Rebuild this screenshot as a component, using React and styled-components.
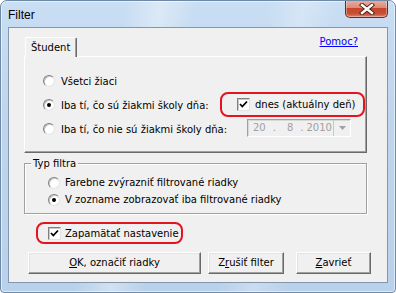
import React from "react";
import styled, { createGlobalStyle } from "styled-components";

const GlobalStyle = createGlobalStyle`
  html, body {
    margin: 0;
    padding: 0;
    background: #ffffff;
  }
  body {
    font-family: "DejaVu Sans", "Liberation Sans", sans-serif;
    font-size: 10px;
    color: #000;
  }
`;

const Window = styled.div`
  width: 396px;
  height: 293px;
  box-sizing: border-box;
  display: flex;
  flex-direction: column;
  border: 1px solid #6f8aa6;
  border-radius: 7px 7px 4px 4px;
  padding: 0 7px 9px 7px;
  background:
    linear-gradient(100deg, rgba(255,255,255,0) 28%, rgba(255,255,255,0.35) 36%, rgba(255,255,255,0) 44%),
    linear-gradient(100deg, rgba(255,255,255,0) 60%, rgba(255,255,255,0.25) 68%, rgba(255,255,255,0) 76%),
    linear-gradient(to bottom, #c9def3 0%, #bed5ed 40%, #b9d1ea 100%);
  box-shadow: inset 0 0 0 1px rgba(255, 255, 255, 0.55);
  overflow: hidden;
`;

const TitleBar = styled.div`
  height: 26px;
  display: flex;
  align-items: center;
  flex-shrink: 0;
`;

const Title = styled.span`
  font-family: "Liberation Sans", Arial, sans-serif;
  font-size: 12px;
  color: #000;
  margin-top: 1px;
`;

const CloseButton = styled.div`
  margin-left: auto;
  align-self: flex-start;
  margin-top: -1px;
  width: 43px;
  height: 18px;
  box-sizing: border-box;
  border: 1px solid #6b2a1e;
  border-top: none;
  border-radius: 0 0 5px 5px;
  background: linear-gradient(
    to bottom,
    #eab1a3 0%,
    #dc8a76 45%,
    #c5462d 50%,
    #c84f35 80%,
    #e0826a 100%
  );
  box-shadow: inset 0 0 0 1px rgba(255, 255, 255, 0.35);
  display: flex;
  align-items: center;
  justify-content: center;
`;

const Client = styled.div`
  flex: 1;
  display: flex;
  flex-direction: column;
  background: #f0f0f0;
  border: 1px solid #8396ab;
`;

const TabRow = styled.div`
  height: 20px;
  margin: 9px 20px 0 15px;
  display: flex;
  align-items: flex-start;
`;

const Tab = styled.div`
  position: relative;
  z-index: 1;
  margin-left: 1px;
  height: 20px;
  box-sizing: border-box;
  padding: 0 6px 1px 5px;
  display: flex;
  align-items: center;
  background: #f0f0f0;
  border-top: 1px solid #ffffff;
  border-left: 1px solid #ffffff;
  border-right: 1px solid #696969;
  border-radius: 2px 2px 0 0;
  box-shadow: inset -1px 0 0 #a0a0a0;
`;

const HelpLink = styled.a`
  margin-left: auto;
  margin-right: 9px;
  margin-top: -1px;
  color: #0000ff;
  text-decoration: underline;
  cursor: pointer;
`;

const TabPanel = styled.div`
  margin: -1px 20px 0 15px;
  height: 97px;
  box-sizing: border-box;
  border: 1px solid;
  border-color: #ffffff #696969 #696969 #ffffff;
  box-shadow: inset -1px -1px 0 #a0a0a0;
  padding: 12px 0 0 18px;
  display: flex;
  flex-direction: column;
`;

const OptionRow = styled.div`
  height: ${(p) => p.$h}px;
  display: flex;
  align-items: center;
`;

const Radio = styled.span`
  position: relative;
  width: 12px;
  height: 12px;
  box-sizing: border-box;
  flex-shrink: 0;
  border-radius: 50%;
  background: #ffffff;
  border: 1px solid;
  border-color: #808080 #e2e2e2 #e2e2e2 #808080;
  box-shadow: inset 1px 1px 0 #c8c8c8;

  &::after {
    content: "";
    display: ${(p) => (p.$checked ? "block" : "none")};
    position: absolute;
    left: 3px;
    top: 3px;
    width: 4px;
    height: 4px;
    border-radius: 50%;
    background: #000;
  }
`;

const Label = styled.span`
  margin-left: ${(p) => p.$gap || 6}px;
  white-space: nowrap;
`;

const Marked = styled.div`
  width: ${(p) => p.$w}px;
  height: ${(p) => p.$h}px;
  box-sizing: border-box;
  border: 2px solid #e3141e;
  border-radius: 8px;
  display: flex;
  align-items: center;
  padding-left: ${(p) => p.$pl}px;
  margin-left: ${(p) => (p.$auto ? "auto" : `${p.$ml}px`)};
  margin-right: ${(p) => p.$mr || 0}px;
  margin-top: ${(p) => p.$mt || 0}px;
`;

const Box = styled.span`
  width: 13px;
  height: 13px;
  box-sizing: border-box;
  flex-shrink: 0;
  background: #ffffff;
  border: 1px solid;
  border-color: #808080 #e2e2e2 #e2e2e2 #808080;
  box-shadow: inset 1px 1px 0 #c8c8c8;
  display: flex;
  align-items: center;
  justify-content: center;
`;

const DatePicker = styled.div`
  margin-left: auto;
  margin-right: 15px;
  margin-top: -3px;
  width: 104px;
  height: 18px;
  box-sizing: border-box;
  border: 1px solid;
  border-color: #a0a0a0 #ffffff #ffffff #a0a0a0;
  box-shadow: inset 1px 1px 0 #d8d8d8;
  background: #f0f0f0;
  display: flex;
`;

const DateText = styled.div`
  flex: 1;
  display: flex;
  align-items: center;
  padding-left: 5px;
  color: #a0a0a0;
`;

const DatePart = styled.span`
  margin-left: ${(p) => p.$ml || 0}px;
`;

const DropButton = styled.div`
  width: 17px;
  box-sizing: border-box;
  border-left: 1px solid #c8c8c8;
  display: flex;
  align-items: center;
  justify-content: center;
`;

const Group = styled.fieldset`
  margin: 4px 20px 0 15px;
  height: 57px;
  box-sizing: border-box;
  border: 1px solid #a0a0a0;
  box-shadow: inset 1px 1px 0 #ffffff, 1px 1px 0 #ffffff;
  padding: 4px 0 0 23px;
  min-width: 0;
`;

const Legend = styled.legend`
  margin-left: -17px;
  padding: 0 2px;
  line-height: 13px;
  background: #f0f0f0;
`;

const ButtonRow = styled.div`
  display: flex;
  margin: 8px 0 0 19px;
`;

const Button = styled.div`
  width: ${(p) => p.$w}px;
  margin-left: ${(p) => p.$ml || 0}px;
  height: 22px;
  box-sizing: border-box;
  background: #f0f0f0;
  border: 1px solid;
  border-color: #ffffff #696969 #696969 #ffffff;
  box-shadow: inset -1px -1px 0 #a0a0a0, inset 1px 1px 0 #e3e3e3;
  display: flex;
  align-items: center;
  justify-content: center;
  padding-bottom: 1px;
  white-space: nowrap;

  u {
    text-decoration: underline;
    text-underline-offset: 1px;
  }
`;

const CloseGlyph = () => (
  <svg width="16" height="12" viewBox="0 0 16 12">
    <path d="M3 2 L13 10 M13 2 L3 10" stroke="#4a1a10" strokeWidth="4.2" strokeLinecap="square" fill="none" />
    <path d="M3 2 L13 10 M13 2 L3 10" stroke="#ffffff" strokeWidth="2.4" strokeLinecap="square" fill="none" />
  </svg>
);

const Check = () => (
  <svg width="9" height="9" viewBox="0 0 9 9">
    <path d="M1 4 L3.3 6.5 L8 1.5" stroke="#000" strokeWidth="1.8" fill="none" />
  </svg>
);

const Arrow = () => (
  <svg width="7" height="4" viewBox="0 0 7 4">
    <path d="M0 0 L7 0 L3.5 4 Z" fill="#a0a0a0" />
  </svg>
);

export default function App() {
  return (
    <>
      <GlobalStyle />
      <Window>
        <TitleBar>
          <Title>Filter</Title>
          <CloseButton>
            <CloseGlyph />
          </CloseButton>
        </TitleBar>
        <Client>
          <TabRow>
            <Tab>Študent</Tab>
            <HelpLink>Pomoc?</HelpLink>
          </TabRow>
          <TabPanel>
            <OptionRow $h={24}>
              <Radio />
              <Label>Všetci žiaci</Label>
            </OptionRow>
            <OptionRow $h={24}>
              <Radio $checked />
              <Label>Iba tí, čo sú žiakmi školy dňa:</Label>
              <Marked $auto $w={145} $h={25} $pl={15} $mr={1} $mt={-1}>
                <Box>
                  <Check />
                </Box>
                <Label $gap={5}>dnes (aktuálny deň)</Label>
              </Marked>
            </OptionRow>
            <OptionRow $h={24}>
              <Radio />
              <Label>Iba tí, čo nie sú žiakmi školy dňa:</Label>
              <DatePicker>
                <DateText>
                  <DatePart>20</DatePart>
                  <DatePart $ml={7}>.</DatePart>
                  <DatePart $ml={11}>8</DatePart>
                  <DatePart $ml={7}>.</DatePart>
                  <DatePart $ml={3}>2010</DatePart>
                </DateText>
                <DropButton>
                  <Arrow />
                </DropButton>
              </DatePicker>
            </OptionRow>
          </TabPanel>
          <Group>
            <Legend>Typ filtra</Legend>
            <OptionRow $h={17}>
              <Radio />
              <Label $gap={5}>Farebne zvýrazniť filtrované riadky</Label>
            </OptionRow>
            <OptionRow $h={17}>
              <Radio $checked />
              <Label $gap={5}>V zozname zobrazovať iba filtrované riadky</Label>
            </OptionRow>
          </Group>
          <Marked $ml={27} $mt={8} $w={147} $h={22} $pl={10}>
            <Box>
              <Check />
            </Box>
            <Label $gap={4}>Zapamätať nastavenie</Label>
          </Marked>
          <ButtonRow>
            <Button $w={173}>
              <span>
                <u>O</u>K, označiť riadky
              </span>
            </Button>
            <Button $w={76} $ml={7}>
              <span>
                Z<u>r</u>ušiť filter
              </span>
            </Button>
            <Button $w={75} $ml={12}>
              <span>
                <u>Z</u>avrieť
              </span>
            </Button>
          </ButtonRow>
        </Client>
      </Window>
    </>
  );
}
